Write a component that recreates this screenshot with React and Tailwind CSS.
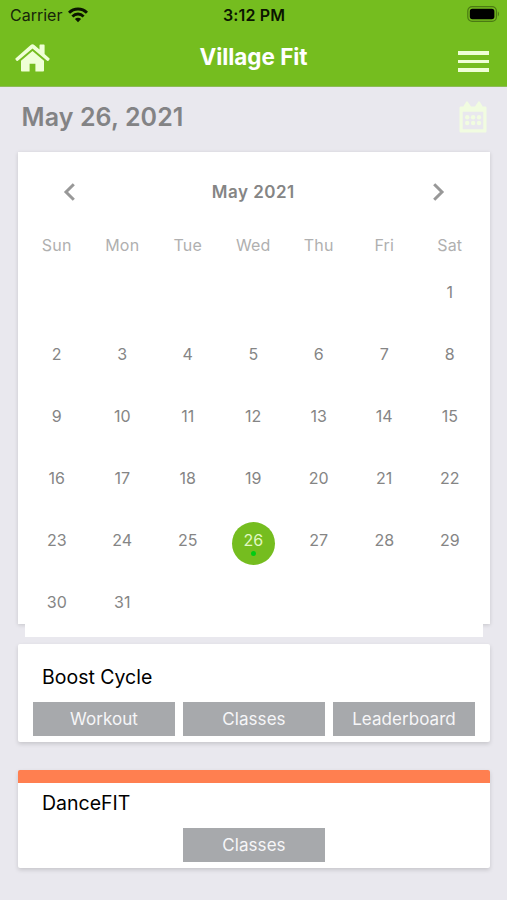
import { useState } from "react";

const WEEKDAYS = ["Sun", "Mon", "Tue", "Wed", "Thu", "Fri", "Sat"];

// May 2021 starts on a Saturday
const FIRST_WEEKDAY = 6;
const DAYS_IN_MONTH = 31;

const HomeIcon = () => (
  <svg width="35" height="28" viewBox="0 0 35 28" fill="#efffd6">
    <path d="M17.5 0.2c0.7 0 1.3 0.2 1.8 0.7l5.2 4.5V1.6c0-0.6 0.4-1 1-1h3.1c0.6 0 1 0.4 1 1v8.4l4.7 4.2c0.5 0.4 0.5 1 0.1 1.4l-0.9 1.1c-0.4 0.5-1 0.5-1.4 0.1L17.5 4.6 2.9 16.8c-0.4 0.4-1 0.4-1.4-0.1l-0.9-1.1c-0.4-0.4-0.4-1 0.1-1.4L15.7 0.9c0.5-0.5 1.1-0.7 1.8-0.7z" />
    <path d="M17.5 7L29 16.7v9.7c0 0.7-0.5 1.2-1.2 1.2h-7.4v-7.8h-5.8v7.8H7.2c-0.7 0-1.2-0.5-1.2-1.2V16.7z" />
  </svg>
);

const WifiIcon = () => (
  <svg width="20" height="16" viewBox="0 0 20 16" fill="none" stroke="#0b1500">
    <path d="M1 5.8C6 0.7 14 0.7 19 5.8" strokeWidth="3" />
    <path d="M4.4 9.4C7.6 6.2 12.4 6.2 15.6 9.4" strokeWidth="2.8" />
    <path d="M10 15.2L6.9 12.1C8.7 10.4 11.3 10.4 13.1 12.1Z" fill="#0b1500" stroke="none" />
  </svg>
);

const BatteryIcon = () => (
  <svg width="33" height="16" viewBox="0 0 33 16">
    <rect x="0.8" y="0.6" width="28.6" height="14.8" rx="4.4" fill="none" stroke="#4b7a13" strokeWidth="1.2" />
    <rect x="2.8" y="2.8" width="24.6" height="10.4" rx="2.6" fill="#000" />
    <path d="M30.8 5.6c1.5 0.6 1.5 4.2 0 4.8z" fill="#4b7a13" />
  </svg>
);

const CalendarIcon = () => (
  <svg width="28" height="33" viewBox="0 0 28 33" fill="#f1fce0">
    <path
      fillRule="evenodd"
      d="M1.5 5.5H4.3L7.2 0.8Q8 -0.2 8.8 0.8L12 5.5H16L19.2 0.8Q20 -0.2 20.8 0.8L23.7 5.5H26.5Q27.5 5.5 27.5 7V30Q27.5 31.5 26.5 31.5H1.5Q0.5 31.5 0.5 30V7Q0.5 5.5 1.5 5.5ZM3.7 10.8V28.2H24.3V10.8Z"
    />
    <g>
      <circle cx="8.2" cy="16.3" r="2.2" />
      <circle cx="14.1" cy="16.3" r="2.2" />
      <circle cx="20" cy="16.3" r="2.2" />
      <circle cx="8.2" cy="22" r="2.2" />
      <circle cx="14.1" cy="22" r="2.2" />
      <circle cx="20" cy="22" r="2.2" />
    </g>
  </svg>
);

const Arrow = ({ flip }) => (
  <svg
    width="12"
    height="18"
    viewBox="0 0 12 18"
    fill="none"
    stroke="#989898"
    strokeWidth="3"
    className={flip ? "rotate-180" : ""}
  >
    <path d="M10.8 1.2L3 9L10.8 16.8" />
  </svg>
);

const Header = () => (
  <header className="h-[87px] bg-[#75bd1f] border-b border-[#8dbb58]">
    <div className="grid h-[30px] grid-cols-3 items-center pl-[10px] pr-[7px]">
      <div className="flex items-center gap-[6px] text-[#17260a]">
        <span className="text-[16px]">Carrier</span>
        <WifiIcon />
      </div>
      <p className="pr-[2px] text-center text-[16px] font-semibold tracking-[0.15px] text-[#0b1500]">
        3:12 PM
      </p>
      <div className="-mt-[2px] flex justify-end">
        <BatteryIcon />
      </div>
    </div>
    <div className="grid h-[56px] grid-cols-3 items-center pl-[15px] pr-[18px]">
      <HomeIcon />
      <h1 className="-mt-[2px] whitespace-nowrap pl-[3px] text-center text-[22.5px] font-bold tracking-[-0.05px] text-white">
        Village Fit
      </h1>
      <button className="mt-[7px] flex flex-col gap-[5px] justify-self-end" aria-label="Menu">
        <span className="h-[3.5px] w-[31px] bg-[#efffd6]" />
        <span className="h-[3.5px] w-[31px] bg-[#efffd6]" />
        <span className="h-[3.5px] w-[31px] bg-[#efffd6]" />
      </button>
    </div>
  </header>
);

const Day = ({ day, selected, onSelect }) => (
  <button
    onClick={() => onSelect(day)}
    className="flex h-[62px] items-start justify-center"
  >
    {selected ? (
      <span className="flex size-[43px] flex-col items-center rounded-full bg-[#75bd1f] pt-[8px] text-[16px] leading-5 text-[#e2f8c4]">
        <span className="-ml-px">{day}</span>
        <span className="mt-[1px] size-[5px] rounded-full bg-[#00cc14]" />
      </span>
    ) : (
      <span className="pr-px pt-[8px] text-[16px] leading-5 text-[#858585]">
        {day}
      </span>
    )}
  </button>
);

const Calendar = ({ selectedDay, onSelect }) => {
  const days = Array.from({ length: DAYS_IN_MONTH }, (_, i) => i + 1);

  return (
    <section className="ml-[18px] mr-[17px] h-[472px] bg-white shadow-[0_1px_4px_rgba(0,0,0,0.15)]">
      <div className="relative ml-[6.5px] h-[485px] w-[458.5px] bg-white">
        <div className="flex h-[80px] items-center justify-between px-[38px]">
          <Arrow />
          <h2 className="pr-px pt-px text-[17px] font-semibold tracking-[0.5px] text-[#858585]">
            May 2021
          </h2>
          <Arrow flip />
        </div>
        <div className="grid h-[42px] grid-cols-7 pt-[3px]">
          {WEEKDAYS.map((name) => (
            <span key={name} className="pr-px text-center text-[16px] leading-5 tracking-[0.2px] text-[#b0b0b0]">
              {name}
            </span>
          ))}
        </div>
        <div className="grid grid-cols-7">
          {Array.from({ length: FIRST_WEEKDAY }, (_, i) => (
            <span key={`blank-${i}`} />
          ))}
          {days.map((day) => (
            <Day
              key={day}
              day={day}
              selected={day === selectedDay}
              onSelect={onSelect}
            />
          ))}
        </div>
      </div>
    </section>
  );
};

const CardButton = ({ children, className = "" }) => (
  <button
    className={`h-[34px] bg-[#a7a9ac] text-[17px] leading-[33px] tracking-[0.05px] text-[#f6f6f8] ${className}`}
  >
    {children}
  </button>
);

const App = () => {
  const [selectedDay, setSelectedDay] = useState(26);

  return (
    <div className="h-[900px] w-[507px] overflow-hidden bg-[#e9e8ee] font-['Inter','Liberation_Sans',sans-serif]">
      <Header />
      <div className="flex h-[65px] items-start justify-between pl-[21.5px] pr-5 pt-[14px]">
        <p className="text-[25px] font-semibold leading-8 tracking-[0.1px] text-[#838385]">
          May {selectedDay}, 2021
        </p>
        <CalendarIcon />
      </div>

      <Calendar selectedDay={selectedDay} onSelect={setSelectedDay} />

      <section className="ml-[18px] mr-[17px] mt-5 h-[98px] rounded-[2px] bg-white px-[15px] shadow-[0_2px_4px_rgba(0,0,0,0.15)]">
        <h3 className="h-[58px] pl-[9px] pt-[18px] text-[19.5px] leading-[30px] text-black">
          Boost Cycle
        </h3>
        <div className="grid grid-cols-3 gap-2">
          <CardButton>Workout</CardButton>
          <CardButton>Classes</CardButton>
          <CardButton>Leaderboard</CardButton>
        </div>
      </section>

      <section className="ml-[18px] mr-[17px] mt-7 h-[98px] rounded-[2px] border-t-[13px] border-[#ff7f50] bg-white px-[15px] shadow-[0_2px_4px_rgba(0,0,0,0.15)]">
        <h3 className="h-[45px] pl-[9px] pt-[5px] text-[19.5px] leading-[30px] text-black">
          DanceFIT
        </h3>
        <div className="grid grid-cols-3 gap-2">
          <CardButton className="col-start-2">Classes</CardButton>
        </div>
      </section>
    </div>
  );
};

export default App;
